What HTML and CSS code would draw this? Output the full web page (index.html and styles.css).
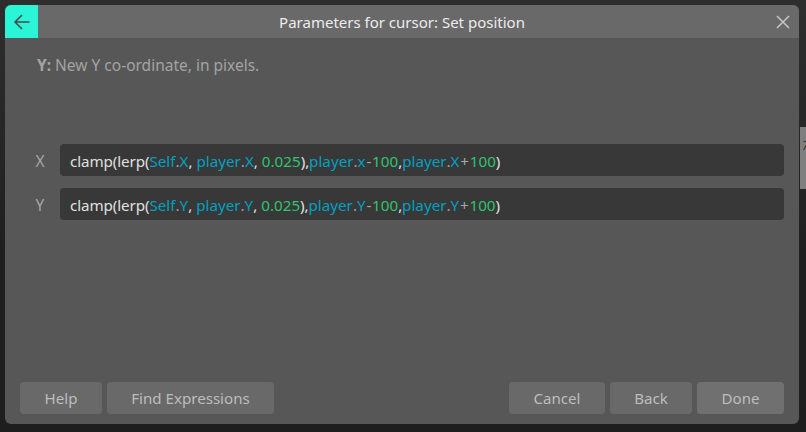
FILE: index.html
```html
<!DOCTYPE html>
<html lang="en">
<head>
<meta charset="utf-8">
<title>Parameters for cursor: Set position</title>
<link rel="stylesheet" href="styles.css">
</head>
<body>
<div class="behind"><span class="behind-text">7</span></div>
<div class="dialog">
  <header class="titlebar">
    <button class="back" aria-label="Back">
      <svg width="20" height="20" viewBox="0 0 20 20"><path d="M17.5 10H3M10 3l-7 7 7 7" fill="none" stroke="#4a4a4a" stroke-width="1.6"/></svg>
    </button>
    <div class="title">Parameters for cursor: Set position</div>
    <button class="close" aria-label="Close">
      <svg width="14" height="14" viewBox="0 0 14 14"><path d="M1 1l12 12M13 1L1 13" fill="none" stroke="#c4c4c4" stroke-width="1.6"/></svg>
    </button>
  </header>
  <main class="body">
    <p class="help"><b>Y:</b> New Y co-ordinate, in pixels.</p>
    <div class="params">
      <div class="row">
        <label class="label">X</label>
        <div class="expr"><span class="fn">clamp(lerp(</span><span class="obj">Self</span><span class="dot">.</span><span class="obj">X</span>, <span class="obj">player</span><span class="dot">.</span><span class="obj">X</span>, <span class="num">0.025</span><span class="fn">),</span><span class="obj">player</span><span class="dot">.</span><span class="obj">x</span><span class="op">-</span><span class="num">100</span><span class="fn">,</span><span class="obj">player</span><span class="dot">.</span><span class="obj">X</span><span class="op">+</span><span class="num">100</span>)</div>
      </div>
      <div class="row">
        <label class="label">Y</label>
        <div class="expr"><span class="fn">clamp(lerp(</span><span class="obj">Self</span><span class="dot">.</span><span class="obj">Y</span>, <span class="obj">player</span><span class="dot">.</span><span class="obj">Y</span>, <span class="num">0.025</span><span class="fn">),</span><span class="obj">player</span><span class="dot">.</span><span class="obj">Y</span><span class="op">-</span><span class="num">100</span><span class="fn">,</span><span class="obj">player</span><span class="dot">.</span><span class="obj">Y</span><span class="op">+</span><span class="num">100</span>)</div>
      </div>
    </div>
    <footer class="footer">
      <div class="group">
        <button class="btn help-btn">Help</button>
        <button class="btn find-btn">Find Expressions</button>
      </div>
      <div class="group">
        <button class="btn cancel-btn">Cancel</button>
        <button class="btn back-btn">Back</button>
        <button class="btn done-btn">Done</button>
      </div>
    </footer>
  </main>
</div>
</body>
</html>
```
FILE: styles.css
```css
* { box-sizing: border-box; }
html, body { margin: 0; height: 100%; }
body {
  width: 806px;
  height: 432px;
  overflow: hidden;
  position: relative;
  background: linear-gradient(#2e2e2e, #1f1f1f 60%, #1e1e1e);
  padding: 5px 7px 8px 5px;
  font-family: "Noto Sans", sans-serif;
  font-size: 15px;
}
.behind {
  position: absolute;
  left: 800px;
  top: 127px;
  width: 6px;
  height: 62px;
  background: #7f7f7f;
  overflow: hidden;
}
.behind-text {
  position: absolute;
  left: 2px;
  top: 10px;
  color: #333;
  font-size: 12px;
  font-style: italic;
}
.dialog {
  position: relative;
  width: 794px;
  height: 419px;
  background: #575757;
  border-radius: 6px;
  overflow: hidden;
  display: flex;
  flex-direction: column;
}
.titlebar {
  height: 33px;
  background: #696969;
  display: flex;
  align-items: center;
  flex: none;
}
button { font-family: inherit; border: 0; padding: 0; margin: 0; }
.back {
  width: 33px;
  height: 33px;
  background: #2af5d6;
  display: flex;
  align-items: center;
  justify-content: center;
  flex: none;
}
.title {
  flex: 1;
  text-align: center;
  color: #ececec;
  font-size: 15px;
}
.close {
  width: 33px;
  height: 33px;
  background: none;
  display: flex;
  align-items: center;
  justify-content: center;
  flex: none;
}
.body {
  flex: 1;
  display: flex;
  flex-direction: column;
  padding: 0 15px 10px 15px;
}
.help {
  margin: 16px 0 0 17px;
  color: #a3a3a3;
  font-size: 15.5px;
  line-height: 22px;
}
.help b { font-weight: 700; }
.params {
  margin-top: 68px;
  display: flex;
  flex-direction: column;
  gap: 12px;
}
.row {
  display: flex;
  align-items: center;
}
.label {
  width: 40px;
  text-align: center;
  color: #a6a6a6;
  font-size: 15.5px;
  line-height: 34px;
  height: 32px;
  flex: none;
}
.expr {
  flex: 1;
  height: 32px;
  line-height: 34px;
  padding-left: 10px;
  background: #383838;
  border-radius: 4px;
  color: #e0e0e0;
  font-size: 15.2px;
  font-kerning: none;
  white-space: nowrap;
}
.fn { letter-spacing: -0.1px; }
.op { color: #a8a8a8; padding: 0 0.8px; }
.obj { color: #00a0c0; }
.dot { color: #a0a0a0; }
.num { color: #2ec46e; }
.footer {
  margin-top: auto;
  display: flex;
  justify-content: space-between;
}
.group { display: flex; gap: 5px; }
.btn {
  height: 32px;
  background: #696969;
  border-radius: 4px;
  color: #bdbdbd;
  font-size: 15.1px;
  text-align: center;
}
.help-btn { width: 82px; }
.find-btn { width: 167px; }
.cancel-btn { width: 96px; }
.back-btn { width: 82px; }
.done-btn { width: 87px; background: #707070; }
```
